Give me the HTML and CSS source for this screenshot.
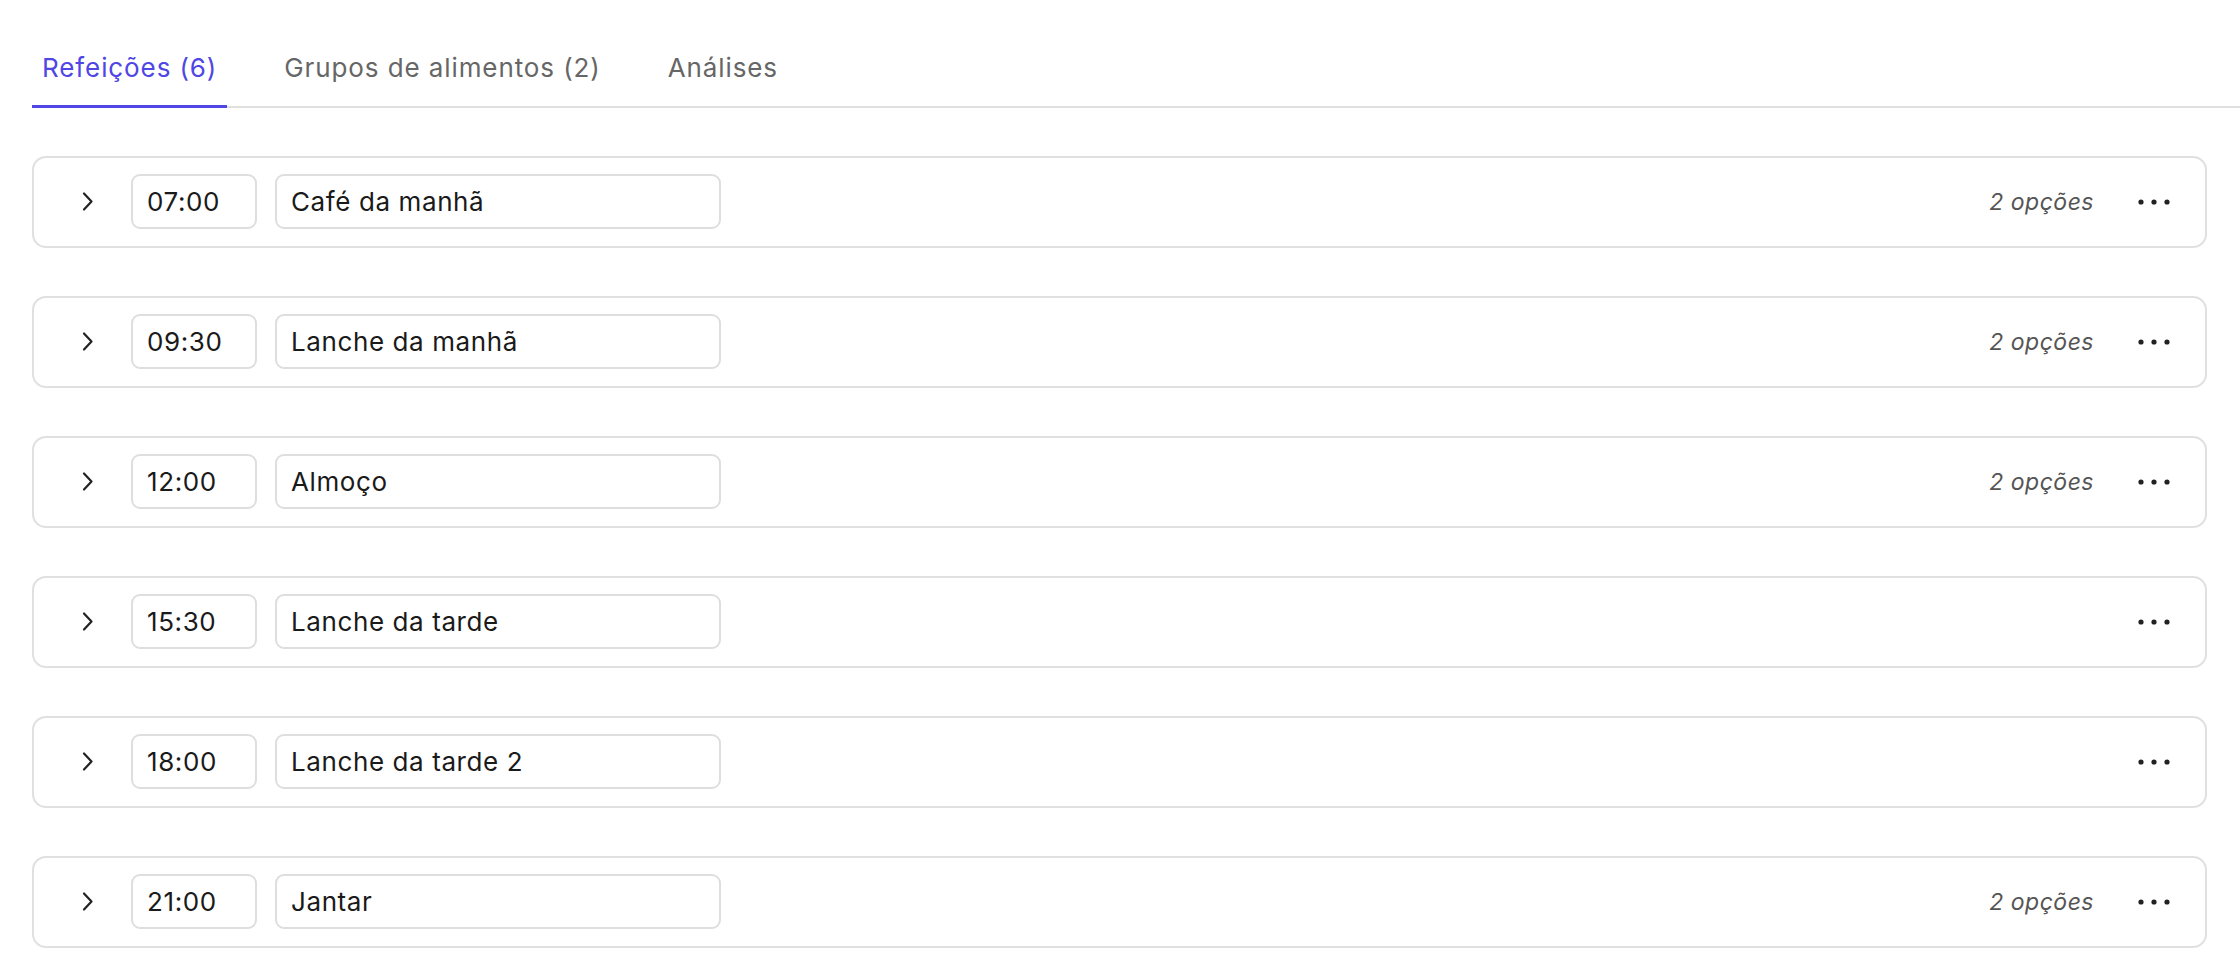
FILE: index.html
```html
<!DOCTYPE html>
<html>
<head>
  <title>Refeições</title>
  <link rel="stylesheet" href="styles.css">
</head>
<body>

  <div class="tabs">
    <button class="tab active">Refeições (6)</button>
    <button class="tab">Grupos de alimentos (2)</button>
    <button class="tab">Análises</button>
  </div>

  <div class="meals">

    <div class="meal">
      <button class="toggle"><svg width="13" height="21" viewBox="0 0 13 21"><path d="M3 2.5 L10.5 10.5 L3 18.5"/></svg></button>
      <input class="time" type="text" value="07:00" />
      <input class="name" type="text" value="Café da manhã" />
      <span class="options">2 opções</span>
      <button class="more"><svg width="36" height="8" viewBox="0 0 36 8"><circle cx="5" cy="4" r="2.6"/><circle cx="18" cy="4" r="2.6"/><circle cx="31" cy="4" r="2.6"/></svg></button>
    </div>

    <div class="meal">
      <button class="toggle"><svg width="13" height="21" viewBox="0 0 13 21"><path d="M3 2.5 L10.5 10.5 L3 18.5"/></svg></button>
      <input class="time" type="text" value="09:30" />
      <input class="name" type="text" value="Lanche da manhã" />
      <span class="options">2 opções</span>
      <button class="more"><svg width="36" height="8" viewBox="0 0 36 8"><circle cx="5" cy="4" r="2.6"/><circle cx="18" cy="4" r="2.6"/><circle cx="31" cy="4" r="2.6"/></svg></button>
    </div>

    <div class="meal">
      <button class="toggle"><svg width="13" height="21" viewBox="0 0 13 21"><path d="M3 2.5 L10.5 10.5 L3 18.5"/></svg></button>
      <input class="time" type="text" value="12:00" />
      <input class="name" type="text" value="Almoço" />
      <span class="options">2 opções</span>
      <button class="more"><svg width="36" height="8" viewBox="0 0 36 8"><circle cx="5" cy="4" r="2.6"/><circle cx="18" cy="4" r="2.6"/><circle cx="31" cy="4" r="2.6"/></svg></button>
    </div>

    <div class="meal">
      <button class="toggle"><svg width="13" height="21" viewBox="0 0 13 21"><path d="M3 2.5 L10.5 10.5 L3 18.5"/></svg></button>
      <input class="time" type="text" value="15:30" />
      <input class="name" type="text" value="Lanche da tarde" />
      <span class="options"></span>
      <button class="more"><svg width="36" height="8" viewBox="0 0 36 8"><circle cx="5" cy="4" r="2.6"/><circle cx="18" cy="4" r="2.6"/><circle cx="31" cy="4" r="2.6"/></svg></button>
    </div>

    <div class="meal">
      <button class="toggle"><svg width="13" height="21" viewBox="0 0 13 21"><path d="M3 2.5 L10.5 10.5 L3 18.5"/></svg></button>
      <input class="time" type="text" value="18:00" />
      <input class="name" type="text" value="Lanche da tarde 2" />
      <span class="options"></span>
      <button class="more"><svg width="36" height="8" viewBox="0 0 36 8"><circle cx="5" cy="4" r="2.6"/><circle cx="18" cy="4" r="2.6"/><circle cx="31" cy="4" r="2.6"/></svg></button>
    </div>

    <div class="meal">
      <button class="toggle"><svg width="13" height="21" viewBox="0 0 13 21"><path d="M3 2.5 L10.5 10.5 L3 18.5"/></svg></button>
      <input class="time" type="text" value="21:00" />
      <input class="name" type="text" value="Jantar" />
      <span class="options">2 opções</span>
      <button class="more"><svg width="36" height="8" viewBox="0 0 36 8"><circle cx="5" cy="4" r="2.6"/><circle cx="18" cy="4" r="2.6"/><circle cx="31" cy="4" r="2.6"/></svg></button>
    </div>

  </div>

</body>
</html>
```

FILE: styles.css
```css
body {
  font-family: Inter, "Noto Sans", sans-serif;
  margin: 0;
  padding: 0 33px 0 32px;
  background: #ffffff;
  color: #1a1a1a;
}
.tabs {
  display: flex;
  gap: 47px;
  padding-top: 43px;
  border-bottom: 2px solid #e0e0e0;
  margin-right: -33px;
}
.tab {
  font-family: inherit;
  font-size: 26px;
  letter-spacing: 0.9px;
  line-height: 29px;
  color: #666666;
  background: none;
  border: none;
  border-bottom: 3px solid transparent;
  margin-bottom: -2px;
  padding: 10px 10px 23px;
  cursor: pointer;
}
.tab.active {
  color: #4f46e5;
  border-bottom-color: #4f46e5;
}
.meals {
  display: flex;
  flex-direction: column;
  gap: 48px;
  margin-top: 48px;
}
.meal {
  display: flex;
  align-items: center;
  gap: 18px;
  border: 2px solid #e0e0e0;
  border-radius: 14px;
  padding: 16px 31px 17px 41px;
}
.toggle {
  display: flex;
  align-items: center;
  justify-content: center;
  width: 24px;
  height: 24px;
  padding: 0;
  margin-right: 14px;
  background: none;
  border: none;
}
.toggle path {
  fill: none;
  stroke: #222222;
  stroke-width: 2.2;
  stroke-linecap: round;
  stroke-linejoin: round;
}
input {
  font-family: inherit;
  font-size: 26px;
  letter-spacing: 0.6px;
  color: #1a1a1a;
  height: 55px;
  box-sizing: border-box;
  border: 2px solid #dedede;
  border-radius: 9px;
  padding: 0 14px;
  outline: none;
}
.time {
  width: 126px;
}
.name {
  width: 446px;
}
.options {
  margin-left: auto;
  margin-right: 22px;
  font-size: 23px;
  letter-spacing: 0.5px;
  font-style: italic;
  color: #555555;
}
.more {
  display: flex;
  align-items: center;
  justify-content: center;
  width: 40px;
  height: 40px;
  padding: 0;
  background: none;
  border: none;
}
.more circle {
  fill: #222222;
}
```
